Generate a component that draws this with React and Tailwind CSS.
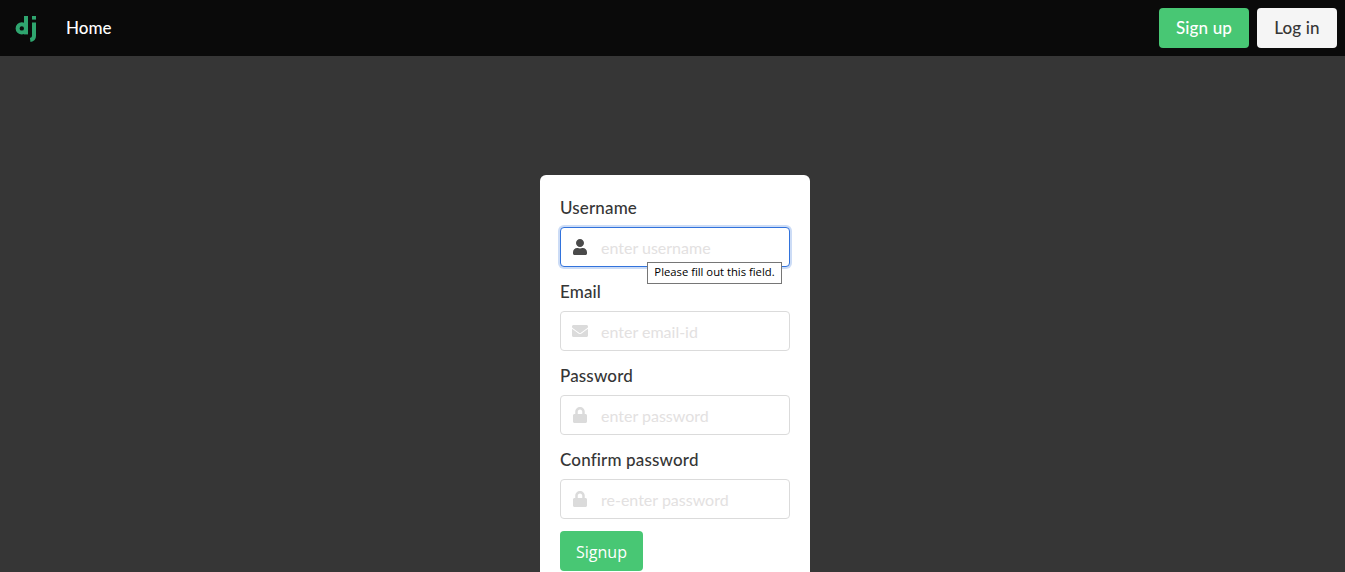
import React from "react";
import { FaUser, FaEnvelope, FaLock } from "react-icons/fa";

const fields = [
  { label: "Username", placeholder: "enter username", Icon: FaUser, focused: true },
  { label: "Email", placeholder: "enter email-id", Icon: FaEnvelope },
  { label: "Password", placeholder: "enter password", Icon: FaLock },
  { label: "Confirm password", placeholder: "re-enter password", Icon: FaLock },
];

const Logo = () => (
  <svg width="24" height="28" viewBox="0 0 24 28" fill="none" stroke="#2fa56f" strokeWidth="4">
    <circle cx="7.8" cy="14.4" r="4.2" />
    <path d="M12 2v18.4" />
    <path d="M20 8.5v13.5c0 2.4-1.2 3.6-3.8 4" />
    <path d="M20 2v3.6" />
  </svg>
);

const Field = ({ label, placeholder, Icon, focused }) => (
  <div className="mb-[12px]">
    <label className="block text-[17px] leading-[24px] font-medium tracking-[0.15px] text-[#363636] pt-px mb-[7px]">{label}</label>
    <div
      className={
        "relative flex items-center h-[40px] rounded-[4px] border bg-white " +
        (focused ? "border-[#3273dc] shadow-[0_0_0_2px_rgba(50,115,220,0.25)]" : "border-[#dbdbdb]")
      }
    >
      <div className="w-[37px] flex justify-center shrink-0">
        <Icon className={"text-[16px] " + (focused ? "text-[#4a4a4a]" : "text-[#dbdbdb]")} />
      </div>
      <span className="text-[16px] text-[#e3e1e1] leading-[24px] pl-[3px] pt-[2px]">{placeholder}</span>
      {focused && (
        <div className="absolute left-[86px] top-[34px] w-[135px] h-[22px] flex items-center justify-center bg-white border border-[#767676] text-[11.25px] text-black pb-px font-['Open_Sans',sans-serif] whitespace-nowrap z-10">
          Please fill out this field.
        </div>
      )}
    </div>
  </div>
);

export default function App() {
  return (
    <div className="h-[572px] overflow-hidden bg-[#363636] font-['Lato','Noto_Sans',sans-serif]">
      <nav className="h-[56px] bg-[#0a0a0a] flex items-center justify-between pl-[14px] pr-[8px]">
        <div className="flex items-center">
          <Logo />
          <a className="ml-[28px] text-white text-[17px] font-medium">Home</a>
        </div>
        <div className="flex gap-[8px]">
          <button className="h-[40px] w-[90px] rounded-[4px] bg-[#48c774] text-white text-[17px] font-medium tracking-[0.15px]">Sign up</button>
          <button className="h-[40px] w-[80px] rounded-[4px] bg-[#f5f5f5] text-[#363636] text-[17px] font-medium tracking-[0.15px]">Log in</button>
        </div>
      </nav>
      <main className="flex justify-center pt-[119px] pl-[5px]">
        <form className="w-[270px] bg-white rounded-[6px] p-[20px]">
          {fields.map((f) => (
            <Field key={f.label} {...f} />
          ))}
          <button type="button" className="h-[40px] w-[83px] rounded-[4px] bg-[#48c774] text-white text-[16px] pt-[2px] font-['Open_Sans',sans-serif]">
            Signup
          </button>
        </form>
      </main>
    </div>
  );
}
